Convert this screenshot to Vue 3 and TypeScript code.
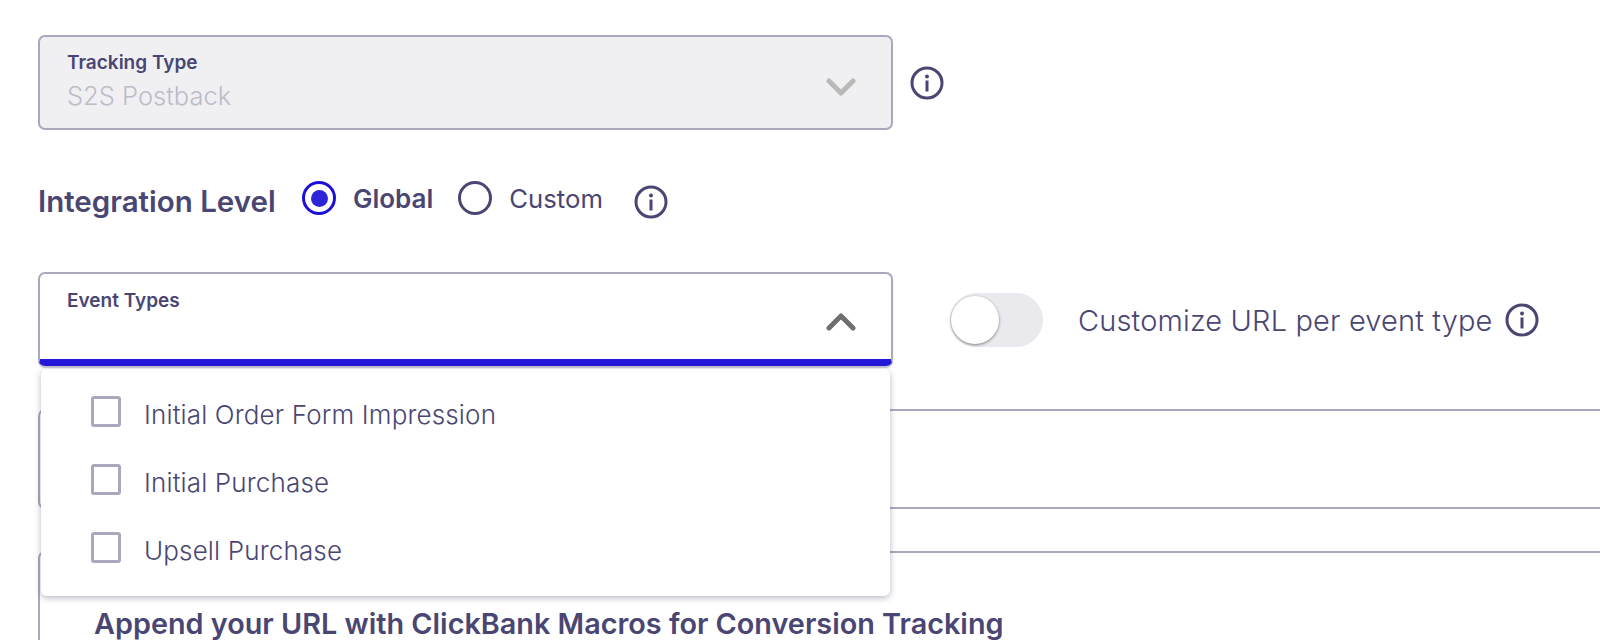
<script setup lang="ts">
const eventTypes: string[] = [
	"Initial Order Form Impression",
	"Initial Purchase",
	"Upsell Purchase",
];
</script>

<template>
	<div class="page">
		<div class="row tracking-row">
			<div class="select select-disabled">
				<div class="select-label">Tracking Type</div>
				<div class="select-value">S2S Postback</div>
				<svg class="chevron" viewBox="0 0 30 20">
					<path d="M3 4l12 12L27 4" fill="none" stroke="#b9b9b9" stroke-width="5" stroke-linecap="round" stroke-linejoin="round" />
				</svg>
			</div>
			<svg class="info info-tracking" viewBox="0 0 34 34">
				<circle cx="17" cy="17" r="15" fill="none" stroke="#4a4673" stroke-width="3" />
				<circle cx="17" cy="10.5" r="2" fill="#4a4673" />
				<rect x="15.5" y="14.5" width="3" height="11" fill="#4a4673" />
			</svg>
		</div>

		<div class="row level-row">
			<span class="level-title">Integration Level</span>
			<span class="radio radio-on"><span class="radio-dot"></span></span>
			<span class="radio-text radio-text-on">Global</span>
			<span class="radio radio-off"></span>
			<span class="radio-text radio-text-off">Custom</span>
			<svg class="info info-level" viewBox="0 0 34 34">
				<circle cx="17" cy="17" r="15" fill="none" stroke="#4a4673" stroke-width="3" />
				<circle cx="17" cy="10.5" r="2" fill="#4a4673" />
				<rect x="15.5" y="14.5" width="3" height="11" fill="#4a4673" />
			</svg>
		</div>

		<div class="row event-row">
			<div class="select-wrap">
				<div class="select select-open">
					<div class="select-label">Event Types</div>
					<svg class="chevron" viewBox="0 0 30 20">
						<path d="M3 16L15 4l12 12" fill="none" stroke="#6f6f6f" stroke-width="5" stroke-linecap="round" stroke-linejoin="round" />
					</svg>
				</div>
				<ul class="menu">
					<li v-for="item in eventTypes" :key="item" class="menu-item">
						<span class="checkbox"></span>
						<span>{{ item }}</span>
					</li>
				</ul>
			</div>
			<div class="toggle"><span class="knob"></span></div>
			<span class="toggle-text">Customize URL per event type</span>
			<svg class="info info-toggle" viewBox="0 0 34 34">
				<circle cx="17" cy="17" r="15" fill="none" stroke="#4a4673" stroke-width="3" />
				<circle cx="17" cy="10.5" r="2" fill="#4a4673" />
				<rect x="15.5" y="14.5" width="3" height="11" fill="#4a4673" />
			</svg>
		</div>

		<div class="url-box"></div>
		<div class="macro-box">
			<div class="macro-title">Append your URL with ClickBank Macros for Conversion Tracking</div>
		</div>
	</div>
</template>

<style scoped>
.page {
	box-sizing: border-box;
	height: 640px;
	overflow: hidden;
	padding: 35px 0 0 38px;
	background: #fff;
	color: #4a4673;
	font-family: Inter, "Liberation Sans", sans-serif;
}

.row {
	display: flex;
	align-items: center;
}

.select {
	position: relative;
	box-sizing: border-box;
	width: 855px;
	height: 95px;
	padding: 15px 27px 0;
	border: 2px solid #aaa8bd;
	border-radius: 7px;
}

.select-disabled {
	background: #f0f0f3;
}

.select-open {
	height: 94px;
	padding-top: 16px;
	border-bottom: 7px solid #2418d6;
	box-shadow: 0 2px 1px #c4c3cf;
}

.select-label {
	font-size: 19px;
	font-weight: 600;
	line-height: 22px;
}

.select-value {
	margin-top: 7px;
	font-size: 25.5px;
	line-height: 30px;
	font-weight: 300;
	color: #bdbcc9;
}

.chevron {
	position: absolute;
	top: 40px;
	right: 35px;
	width: 30px;
	height: 20px;
}

.select-open .chevron {
	top: 38px;
}

.info {
	flex: none;
	width: 34px;
	height: 34px;
}

.info-tracking {
	margin: 0 0 0 17px;
}

.level-row {
	height: 70px;
	margin-top: 35px;
}

.level-title {
	width: 264px;
	font-size: 29.5px;
	font-weight: 600;
	padding-top: 2px;
}

.radio {
	flex: none;
	box-sizing: border-box;
	display: flex;
	align-items: center;
	justify-content: center;
	width: 34px;
	height: 34px;
	margin-top: -4px;
	border-radius: 50%;
}

.radio-on {
	border: 3.5px solid #1c10d8;
}

.radio-dot {
	width: 17px;
	height: 17px;
	border-radius: 50%;
	background: #2f25d8;
}

.radio-off {
	border: 3.5px solid #4a4673;
	margin-left: 25px;
}

.radio-text {
	margin-top: -4px;
	margin-left: 17px;
	font-size: 25.7px;
	font-weight: 400;
}

.radio-text-on {
	font-size: 26px;
	font-weight: 600;
}

.info-level {
	margin: 4px 0 0 31px;
}

.event-row {
	margin-top: 37px;
}

.select-wrap {
	position: relative;
	flex: none;
	z-index: 1;
}

.menu {
	position: absolute;
	top: 97px;
	left: 3px;
	box-sizing: border-box;
	width: 849px;
	height: 227px;
	margin: 0;
	padding: 27px 0 0 50px;
	list-style: none;
	background: #fff;
	border-radius: 6px;
	box-shadow: 0 2px 6px rgba(60, 58, 90, 0.35);
}

.menu-item {
	display: flex;
	align-items: center;
	gap: 23px;
	height: 30px;
	margin-bottom: 38px;
	font-size: 26px;
	letter-spacing: 0.15px;
	font-weight: 300;
}

.menu-item span:last-child {
	padding-top: 6px;
}

.checkbox {
	flex: none;
	box-sizing: border-box;
	width: 30px;
	height: 31px;
	border: 3.5px solid #aaa8bd;
	border-radius: 3px;
}

.toggle {
	flex: none;
	display: flex;
	align-items: center;
	box-sizing: border-box;
	width: 93px;
	height: 54px;
	margin: 1px 0 0 57px;
	background: #e9e9ee;
	border-radius: 27px;
}

.knob {
	width: 48px;
	height: 48px;
	margin-left: 1px;
	border-radius: 50%;
	background: #fff;
	box-shadow: 0 1px 3px rgba(0, 0, 0, 0.45);
}

.toggle-text {
	margin: 3px 0 0 35px;
	font-size: 29px;
	letter-spacing: 0.15px;
	font-weight: 300;
}

.info-toggle {
	margin: 1px 0 0 12px;
}

.url-box {
	box-sizing: border-box;
	height: 100px;
	margin-top: 43px;
	border: 2px solid #aaa8bd;
	border-right: 0;
	border-radius: 7px 0 0 7px;
}

.macro-box {
	box-sizing: border-box;
	height: 120px;
	margin-top: 42px;
	padding: 56px 0 0 54px;
	border: 2px solid #aaa8bd;
	border-right: 0;
	border-bottom: 0;
	border-radius: 7px 0 0 0;
}

.macro-title {
	font-size: 28.8px;
	font-weight: 600;
	line-height: 30px;
}
</style>
